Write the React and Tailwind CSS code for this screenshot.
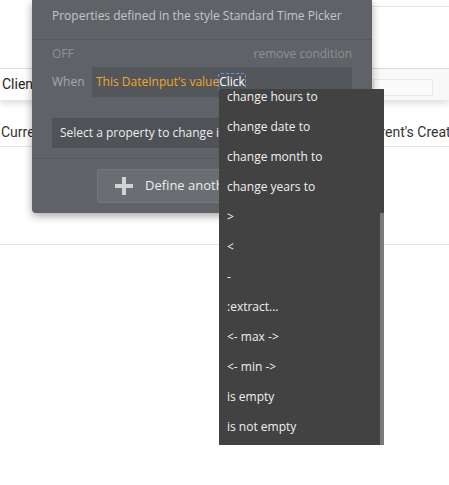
import React from "react";

const items = [
  "change hours to",
  "change date to",
  "change month to",
  "change years to",
  ">",
  "<",
  "-",
  ":extract...",
  "<- max ->",
  "<- min ->",
  "is empty",
  "is not empty",
];

const PlusIcon = () => (
  <svg width="18" height="18" viewBox="0 0 18 18" className="shrink-0">
    <rect x="7" y="0" width="4" height="18" fill="#d0d2d4" />
    <rect x="0" y="7" width="18" height="4" fill="#d0d2d4" />
  </svg>
);

export default function App() {
  return (
    <div className="relative w-[449px] h-[485px] bg-white overflow-hidden font-['Roboto',sans-serif]">
      {/* page behind the popup */}
      <div className="h-[6px]" />
      <div className="ml-[372px] border-t border-[#e6e6e6]" />
      <div className="h-[61px]" />
      <div className="relative h-[32px] border-t border-[#dcdcdc] bg-[#f8f8f8] shadow-[0_4px_6px_rgba(0,0,0,0.12)] flex items-center">
        <div className="h-full flex items-center pl-[2px] pr-2 border-r border-[#dcdcdc] bg-white text-[14px] text-[#222]">
          Client
        </div>
        <div className="ml-auto mr-[16px] mt-[6px] w-[60px] h-[17px] border border-[#e8e8e8] bg-[#fafafa]" />
      </div>
      <div className="h-[18px]" />
      <div className="h-[29px] border-b border-[#e6e6e6] flex items-center text-[14px] text-[#333] whitespace-nowrap">
        <span className="w-[364px] pl-[1px] shrink-0">Current</span>
        <span>Parent's Created Date</span>
      </div>
      <div className="h-[97px]" />
      <div className="border-t border-[#e6e6e6]" />

      {/* condition popup */}
      <div className="absolute left-[32px] top-0 w-[340px] h-[213px] bg-[#5f6368] rounded-b-[4px] shadow-[0_3px_8px_rgba(0,0,0,0.35)] font-['Open_Sans',sans-serif] text-[12px]">
        <div className="h-[40px] pl-[20px] pt-[7px] text-[#c3c6c9] border-b border-[#55595d]">
          Properties defined in the style Standard Time Picker
        </div>
        <div className="px-[20px]">
          <div className="h-[27px] pt-[1px] flex items-center justify-between text-[#8d9195]">
            <span>OFF</span>
            <span>remove condition</span>
          </div>
          <div className="flex items-center h-[30px]">
            <span className="w-[40px] text-[#a5a9ad]">When</span>
            <div className="flex-1 h-full bg-[#53575b] flex items-center pl-[4px]">
              <span className="text-[#f5a623]">This DateInput's value</span>
              <span className="text-white outline-1 outline-dashed outline-[#5aa0e0] leading-[16px] rounded-[2px]">
                Click
              </span>
            </div>
          </div>
          <div className="h-[21px]" />
          <div className="h-[30px] bg-[#4f5357] flex items-center pl-[8px] text-[#eceded] whitespace-nowrap overflow-hidden">
            Select a property to change if the condition is true
          </div>
        </div>
        <div className="mt-[10px] border-t border-[#55595d]" />
        <div className="flex justify-center pt-[10px]">
          <div className="w-[210px] h-[34px] bg-[#6a6e72] border border-[#74787c] rounded-[2px] flex items-center gap-[12px] pl-[17px] text-[#eceded] text-[13px] whitespace-nowrap">
            <PlusIcon />
            Define another condition
          </div>
        </div>
      </div>

      {/* dropdown */}
      <div className="absolute left-[219px] top-[89px] w-[165px] h-[356px] bg-[#424242] overflow-hidden font-['Open_Sans',sans-serif] text-[12px] text-[#f0f0f0]">
        <div className="-mt-[7px]">
          {items.map((t) => (
            <div key={t} className="h-[30px] flex items-center pl-[8px] whitespace-nowrap">
              {t}
            </div>
          ))}
        </div>
        <div className="absolute right-0 top-[124px] w-[4px] h-[232px] bg-[#7a7a7a]" />
      </div>
    </div>
  );
}
